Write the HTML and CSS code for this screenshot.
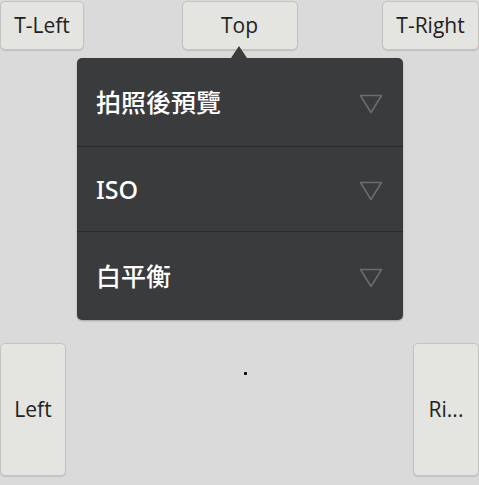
FILE: index.html
```html
<!DOCTYPE html>
<html lang="zh-Hant">
<head>
<meta charset="utf-8">
<title>Popup</title>
<link rel="stylesheet" href="styles.css">
</head>
<body>
<div class="screen">
  <div class="top-row">
    <button class="btn btn-tl">T-Left</button>
    <button class="btn btn-top">Top</button>
    <button class="btn btn-tr">T-Right</button>
  </div>
  <div class="mid-row">
    <button class="btn btn-side">Left</button>
    <button class="btn btn-side">Ri...</button>
  </div>
  <span class="dot"></span>
  <div class="popup">
    <span class="arrow"></span>
    <div class="item item-1"><span class="label">拍照後預覽</span><svg class="tri" width="24" height="20" viewBox="0 0 24 20"><path d="M1.5 1.5 H22.5 L12 18.5 Z" fill="none" stroke="#6b6c6d" stroke-width="1.6" stroke-linejoin="round"/></svg></div>
    <div class="item item-2"><span class="label">ISO</span><svg class="tri" width="24" height="20" viewBox="0 0 24 20"><path d="M1.5 1.5 H22.5 L12 18.5 Z" fill="none" stroke="#6b6c6d" stroke-width="1.6" stroke-linejoin="round"/></svg></div>
    <div class="item item-3"><span class="label">白平衡</span><svg class="tri" width="24" height="20" viewBox="0 0 24 20"><path d="M1.5 1.5 H22.5 L12 18.5 Z" fill="none" stroke="#6b6c6d" stroke-width="1.6" stroke-linejoin="round"/></svg></div>
  </div>
</div>
</body>
</html>
```
FILE: styles.css
```css
html, body {
  margin: 0;
  padding: 0;
  background: #dadada;
}
.screen {
  position: relative;
  width: 479px;
  height: 485px;
  font-family: "Open Sans", "Noto Sans", sans-serif;
}
.top-row {
  display: grid;
  grid-template-columns: 1fr 116px 1fr;
  padding-top: 1px;
}
.btn-tl { justify-self: start; }
.btn-tr { justify-self: end; }
.mid-row {
  display: flex;
  justify-content: space-between;
  margin-top: 293px;
}
.btn {
  box-sizing: border-box;
  margin: 0;
  padding: 0;
  background: #e4e4e0;
  border: 1px solid #c3c3c0;
  border-radius: 5px;
  box-shadow: 0 1px 1px rgba(0,0,0,0.12);
  color: #222;
  font-family: "Open Sans", "Noto Sans", sans-serif;
  font-size: 21px;
  line-height: 1;
  display: flex;
  align-items: center;
  justify-content: center;
}
.btn-tl { width: 84px; height: 49px; }
.btn-top { width: 116px; height: 49px; }
.btn-tr { width: 97px; height: 49px; }
.btn-side {
  width: 66px;
  height: 133px;
}
.dot {
  position: absolute;
  left: 244px;
  top: 372px;
  width: 3px;
  height: 3px;
  background: #000;
  border-radius: 1px;
}
.popup {
  position: absolute;
  left: 77px;
  top: 58px;
  width: 326px;
  background: #3a3b3d;
  border-radius: 5px;
  box-shadow: 0 1px 2px rgba(0,0,0,0.25);
  display: flex;
  flex-direction: column;
}
.arrow {
  position: absolute;
  left: 154px;
  top: -12px;
  width: 0;
  height: 0;
  border-left: 8px solid transparent;
  border-right: 8px solid transparent;
  border-bottom: 12px solid #3a3b3d;
}
.item {
  display: flex;
  align-items: center;
  justify-content: space-between;
  padding: 0 20px 0 19px;
  box-sizing: border-box;
}
.item-1 { height: 88px; }
.item-2 { height: 85px; border-top: 1px solid #2a2b2c; }
.item-3 { height: 89px; border-top: 1px solid #2a2b2c; }
.label {
  color: #fff;
  font-family: "Noto Sans", "Noto Sans CJK TC", sans-serif;
  font-weight: 500;
  font-size: 25px;
  line-height: 1;
}
.tri {
  display: block;
  margin-top: 4px;
}
```
